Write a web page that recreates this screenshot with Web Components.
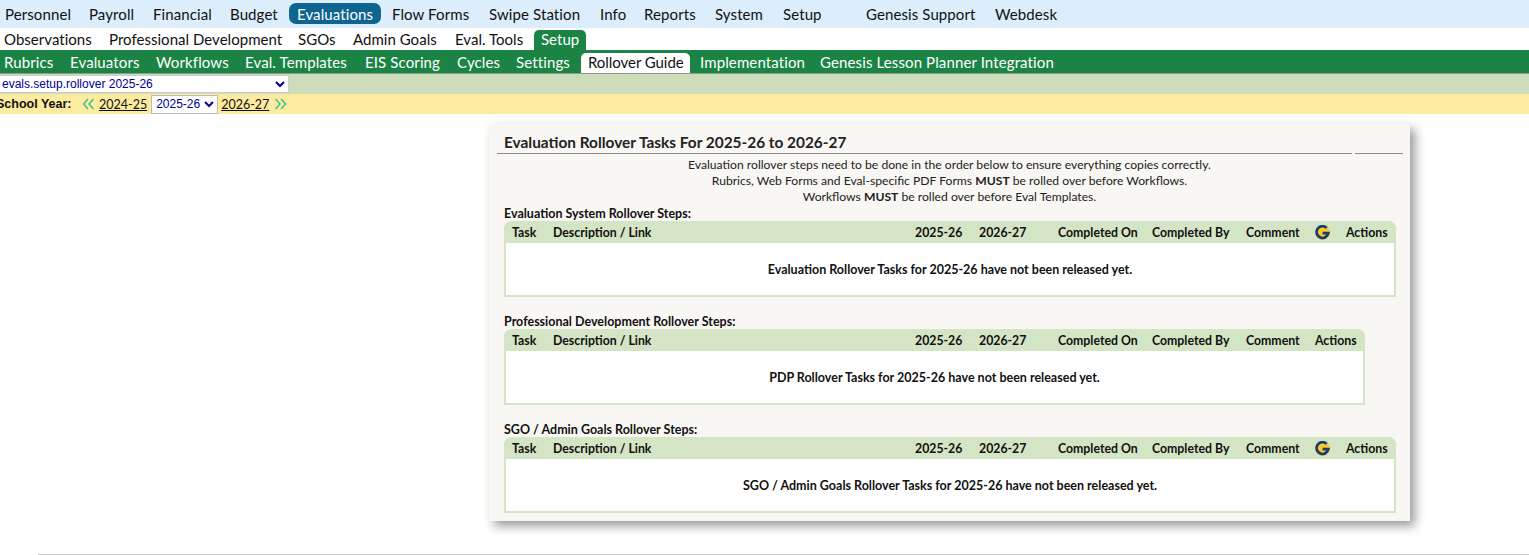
<!DOCTYPE html>
<html lang="en">
<head>
<meta charset="utf-8">
<title>Evaluation Rollover Tasks</title>
<style>
  html, body { margin: 0; padding: 0; background: #fff; height: 555px; overflow: hidden; }
  body { font-family: "Lato", "Liberation Sans", sans-serif; color: #111; }
</style>
</head>
<body>

<menu-bar level="top">
  <menu-link w="84">Personnel</menu-link>
  <menu-link w="64">Payroll</menu-link>
  <menu-link w="77">Financial</menu-link>
  <menu-link w="64">Budget</menu-link>
  <menu-link w="92" active>Evaluations</menu-link>
  <menu-link w="97" ml="6">Flow Forms</menu-link>
  <menu-link w="111">Swipe Station</menu-link>
  <menu-link w="44">Info</menu-link>
  <menu-link w="71">Reports</menu-link>
  <menu-link w="68">System</menu-link>
  <menu-link w="83">Setup</menu-link>
  <menu-link w="129">Genesis Support</menu-link>
  <menu-link w="70">Webdesk</menu-link>
</menu-bar>

<menu-bar level="sub">
  <menu-link w="105">Observations</menu-link>
  <menu-link w="189">Professional Development</menu-link>
  <menu-link w="55">SGOs</menu-link>
  <menu-link w="102">Admin Goals</menu-link>
  <menu-link w="83">Eval. Tools</menu-link>
  <menu-link w="52" active>Setup</menu-link>
</menu-bar>

<menu-bar level="third">
  <menu-link w="66">Rubrics</menu-link>
  <menu-link w="86">Evaluators</menu-link>
  <menu-link w="89">Workflows</menu-link>
  <menu-link w="120">Eval. Templates</menu-link>
  <menu-link w="92">EIS Scoring</menu-link>
  <menu-link w="59">Cycles</menu-link>
  <menu-link w="69">Settings</menu-link>
  <menu-link w="109" active>Rollover Guide</menu-link>
  <menu-link w="120" ml="6">Implementation</menu-link>
  <menu-link w="240">Genesis Lesson Planner Integration</menu-link>
</menu-bar>

<page-select></page-select>
<year-bar></year-bar>

<rollover-panel heading="Evaluation Rollover Tasks For 2025-26 to 2026-27">
  <rollover-table label="Evaluation System Rollover Steps:" genesis
    message="Evaluation Rollover Tasks for 2025-26 have not been released yet."></rollover-table>
  <rollover-table label="Professional Development Rollover Steps:"
    message="PDP Rollover Tasks for 2025-26 have not been released yet."></rollover-table>
  <rollover-table label="SGO / Admin Goals Rollover Steps:" genesis
    message="SGO / Admin Goals Rollover Tasks for 2025-26 have not been released yet."></rollover-table>
</rollover-panel>

<page-foot></page-foot>

<script>
class MenuBar extends HTMLElement {
  constructor() {
    super();
    this.attachShadow({ mode: "open" });
    this.shadowRoot.innerHTML = `
      <style>
        :host { display: flex; box-sizing: border-box; font-size: 15px; letter-spacing: .1px; }
        :host([level="top"]) { height: 28px; background: #dcedfb; padding: 3px 0 0 0; color: #111; --pad: 5px; --pad-active: 8px; --lift: 0px; --pill: #0e6591; --pill-text: #fff; --radius: 7px; --h: 21px; }
        :host([level="sub"]) { height: 22px; background: #fff; padding: 2px 0 0 0; color: #111; --pad: 4px; --pad-active: 7px; --lift: 2px; --pill: #1b8445; --pill-text: #fff; --radius: 5px 5px 0 0; --h: 20px; letter-spacing: .03px; }
        :host([level="third"]) { height: 24px; background: #1b8445; border-bottom: 1px solid #8a9a8f; padding: 3px 0 0 0; color: #fff; --pad: 4px; --pad-active: 7px; --lift: 2px; --pill: #fff; --pill-text: #111; --active-spacing: -.05px; --radius: 5px 5px 0 0; --h: 20px; letter-spacing: .12px; }
      </style>
      <slot></slot>
    `;
  }
}
customElements.define("menu-bar", MenuBar);

class MenuLink extends HTMLElement {
  constructor() {
    super();
    this.attachShadow({ mode: "open" });
    this.shadowRoot.innerHTML = `
      <style>
        :host { display: flex; align-items: center; box-sizing: border-box; height: var(--h); padding-left: var(--pad); padding-bottom: var(--lift); white-space: nowrap; flex: none; }
        :host([active]) { background: var(--pill); color: var(--pill-text); border-radius: var(--radius); padding-left: var(--pad-active); letter-spacing: var(--active-spacing, inherit); }
      </style>
      <slot></slot>
    `;
  }
  connectedCallback() {
    this.style.width = this.getAttribute("w") + "px";
    if (this.hasAttribute("ml")) this.style.marginLeft = this.getAttribute("ml") + "px";
  }
}
customElements.define("menu-link", MenuLink);

class PageSelect extends HTMLElement {
  constructor() {
    super();
    this.attachShadow({ mode: "open" });
    this.shadowRoot.innerHTML = `
      <style>
        :host { display: flex; align-items: center; height: 20px; background: #cdddba; overflow: hidden; }
        select { width: 292px; height: 18px; box-sizing: border-box; margin-left: -3px; padding: 0; border: 1px solid #ccc; background: #fff; color: #000099; font: 12px "Liberation Sans", sans-serif; border-radius: 0; }
      </style>
      <select><option>evals.setup.rollover 2025-26</option></select>
    `;
  }
}
customElements.define("page-select", PageSelect);

class YearBar extends HTMLElement {
  constructor() {
    super();
    this.attachShadow({ mode: "open" });
    this.shadowRoot.innerHTML = `
      <style>
        :host { display: flex; align-items: center; height: 20px; background: #fdeba0; font: 12px "Liberation Sans", sans-serif; color: #111; overflow: hidden; }
        b { margin-left: -4px; width: 86px; font-size: 12.5px; flex: none; white-space: nowrap; }
        a { color: #111; text-decoration: underline; font: 12.5px "Lato", sans-serif; }
        svg { flex: none; }
        select { width: 67px; height: 19px; box-sizing: border-box; margin: 0 3px 0 4px; padding: 0; border: 1px solid #bbb; background: #fff; color: #000099; font: 12px "Liberation Sans", sans-serif; border-radius: 0; }
      </style>
      <b>School Year:</b>
      <svg width="13" height="12" viewBox="0 0 13 12" fill="none" stroke="#3dbb93" stroke-width="1.4"><path d="M6 1 1.5 6 6 11M11.5 1 7 6 11.5 11"/></svg>
      <a style="margin-left:4px">2024-25</a>
      <select><option>2025-26</option></select>
      <a>2026-27</a>
      <svg style="margin-left:5px" width="13" height="12" viewBox="0 0 13 12" fill="none" stroke="#3dbb93" stroke-width="1.4"><path d="M1.5 1 6 6 1.5 11M7 1 11.5 6 7 11"/></svg>
    `;
  }
}
customElements.define("year-bar", YearBar);

class RolloverPanel extends HTMLElement {
  constructor() {
    super();
    this.attachShadow({ mode: "open" });
    this.shadowRoot.innerHTML = `
      <style>
        :host { display: block; box-sizing: border-box; width: 921px; height: 397px; margin: 10px 0 0 489px; padding-top: 8px; background: #f8f7f3; box-shadow: 5px 5px 10px rgba(0,0,0,.4); font-size: 12.15px; color: #222; }
        h2 { margin: 0 7px 0 8px; padding: 0 0 0 7px; height: 21px; box-sizing: border-box; font-size: 15.4px; line-height: 20px; font-weight: 700; color: #222; white-space: nowrap; }
        .rule { display: flex; gap: 3px; margin: 0 7px 0 8px; }
        .rule i { height: 1px; background: #888; flex: 1; }
        .rule i + i { flex: none; width: 48px; }
        .intro { text-align: center; line-height: 16px; padding-top: 3px; box-sizing: border-box; height: 51px; }
        .tables { padding: 0 15px; display: flex; flex-direction: column; }
      </style>
      <h2></h2>
      <div class="rule"><i></i><i></i></div>
      <div class="intro">
        <div>Evaluation rollover steps need to be done in the order below to ensure everything copies correctly.</div>
        <div>Rubrics, Web Forms and Eval-specific PDF Forms <b>MUST</b> be rolled over before Workflows.</div>
        <div>Workflows <b>MUST</b> be rolled over before Eval Templates.</div>
      </div>
      <div class="tables"><slot></slot></div>
    `;
    this.shadowRoot.querySelector("h2").textContent = this.getAttribute("heading");
  }
}
customElements.define("rollover-panel", RolloverPanel);

class RolloverTable extends HTMLElement {
  constructor() {
    super();
    const genesis = this.hasAttribute("genesis");
    this.attachShadow({ mode: "open" });
    this.shadowRoot.innerHTML = `
      <style>
        :host { display: block; margin-bottom: 16px; color: #111; font-size: 12.5px; font-weight: 700; }
        :host(:last-child) { margin-bottom: 0; }
        .label { box-sizing: border-box; height: 16px; padding-top: 1px; line-height: 16px; white-space: nowrap; }
        .box { box-sizing: border-box; height: 76px; width: ${genesis ? 892 : 861}px; border: 2px solid #d3e5c4; border-top: none; border-radius: 8px 8px 0 0; background: #fff; display: flex; flex-direction: column; }
        .head { display: flex; align-items: center; box-sizing: border-box; height: 22px; margin: 0 -2px; padding: 0 0 0 8px; background: #d3e5c4; border-radius: 8px 8px 0 0; flex: none; white-space: nowrap; font-size: 12.3px; }
        .head span, .head div { flex: none; }
        .msg { flex: 1; display: flex; align-items: center; justify-content: center; padding-top: 1px; }
      </style>
      <div class="label"></div>
      <div class="box">
        <div class="head">
          <span style="width:41px">Task</span>
          <span style="flex:1">Description / Link</span>
          <span style="width:64px">2025-26</span>
          <span style="width:79px">2026-27</span>
          <span style="width:94px">Completed On</span>
          <span style="width:94px">Completed By</span>
          <span style="width:69px">Comment</span>
          ${genesis ? `<div style="width:31px;height:15px"><svg width="15" height="15" viewBox="0 0 15 15" style="display:block"><circle cx="7.5" cy="7.5" r="7.3" fill="#f7c92e"/><path d="M11.7 2.9A5.9 5.9 0 1 0 13.3 8.2H7.6" fill="none" stroke="#1c3a6b" stroke-width="2.7"/></svg></div>` : ""}
          <span style="width:50px">Actions</span>
        </div>
        <div class="msg"></div>
      </div>
    `;
    this.shadowRoot.querySelector(".label").textContent = this.getAttribute("label");
    this.shadowRoot.querySelector(".msg").textContent = this.getAttribute("message");
  }
}
customElements.define("rollover-table", RolloverTable);

class PageFoot extends HTMLElement {
  constructor() {
    super();
    this.attachShadow({ mode: "open" });
    this.shadowRoot.innerHTML = `
      <style>
        :host { display: block; height: 1px; margin: 33px 0 0 38px; background: #c8c8c8; }
      </style>
    `;
  }
}
customElements.define("page-foot", PageFoot);
</script>
</body>
</html>
